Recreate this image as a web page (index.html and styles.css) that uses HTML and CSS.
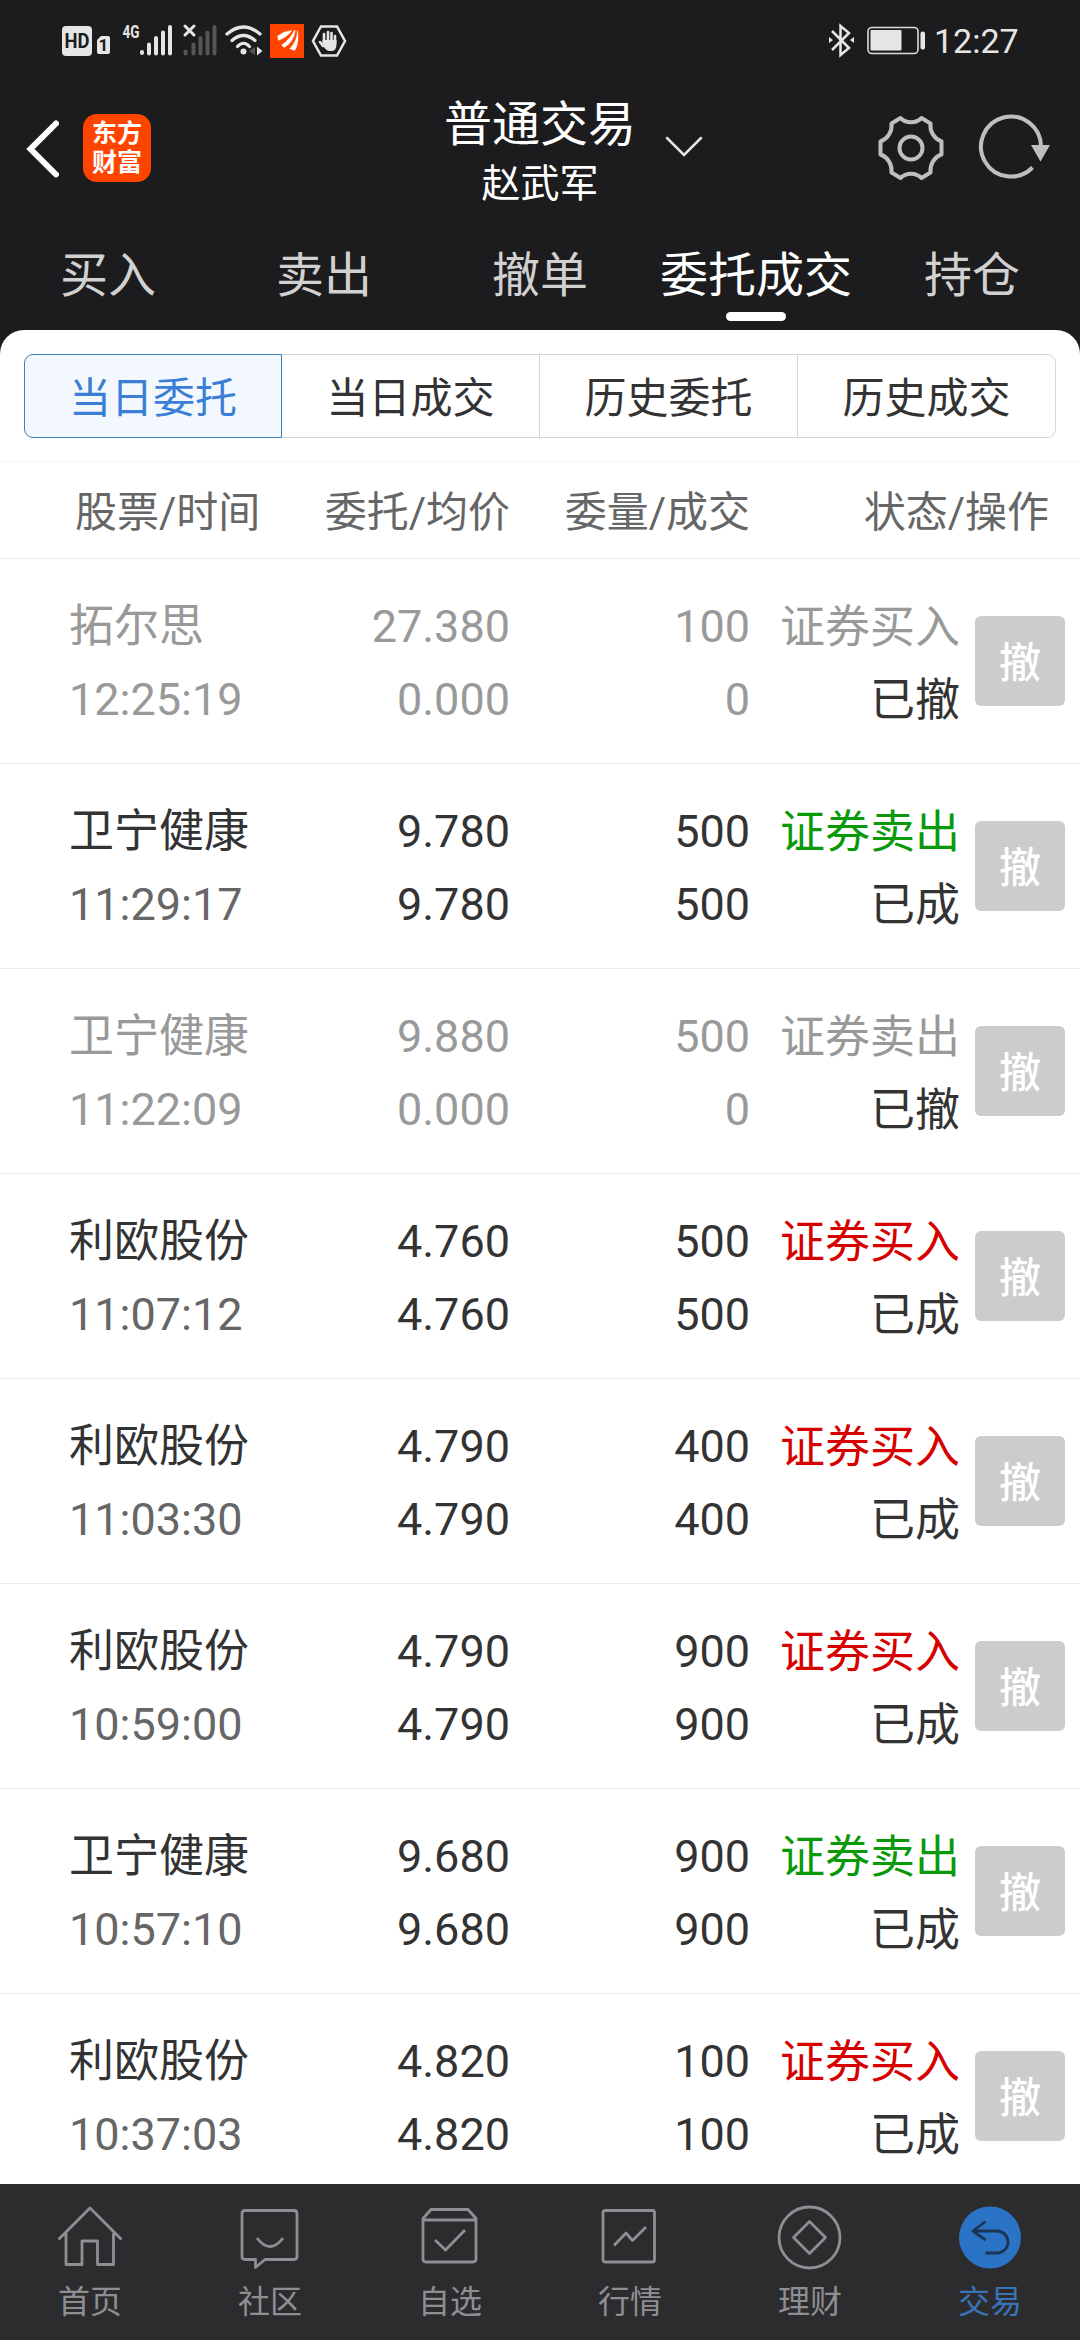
FILE: index.html
```html
<!DOCTYPE html>
<html lang="zh-CN">
<head>
    <meta charset="UTF-8">
    <meta name="viewport" content="width=device-width, initial-scale=1.0">
    <title>普通交易</title>
    <link rel="stylesheet" href="styles.css">
</head>
<body>
    <div class="status-bar">
        <svg class="status-left" width="290" height="40" viewBox="60 20 290 40">
            <rect x="62" y="26" width="30" height="30" rx="4" fill="#e6e6e6"/>
            <text x="77" y="47.500" class="hd" text-anchor="middle" textLength="25" lengthAdjust="spacingAndGlyphs">HD</text>
            <path d="M101 36h7q2 0 2 2v14q0 2-2 2h-9q-2 0-2-2V40z" fill="#e6e6e6"/>
            <text x="103.500" y="51" class="sim" text-anchor="middle">1</text>
            <text x="122.500" y="38" class="net" textLength="17" lengthAdjust="spacingAndGlyphs">4G</text>
            <path d="M142 52v1M149 44.500v9M156 38v15.500M163 32.500v21M170 27v26.500" stroke="#e6e6e6" stroke-width="4" stroke-linecap="round"/>
            <path d="M185.500 51.500v2M193.500 44.500v9M200.500 38v15.500M207.500 32.500v21M214.500 27v26.500" stroke="#555" stroke-width="4" stroke-linecap="round"/>
            <path d="M185 26l9 9M194 26l-9 9" stroke="#e6e6e6" stroke-width="3" stroke-linecap="round"/>
            <g fill="none" stroke="#e6e6e6" stroke-width="3.200" stroke-linecap="round">
                <path d="M227 34q16.500-14 33 0"/>
                <path d="M232 40.500q11.500-10 23 0"/>
                <path d="M237.500 46.500q6-6.500 12 0"/>
            </g>
            <circle cx="243.500" cy="51.500" r="3" fill="#e6e6e6"/>
            <path d="M255 47v8l-6-4z" fill="#555"/>
            <path d="M257 46.500v9l5.500-4.500z" fill="#e6e6e6"/>
            <rect x="270" y="24" width="34" height="34" fill="#ff4400"/>
            <path d="M277 36q7-6 16-6-6 8-15 11zM281 45q9-6 13-15h2q-2 13-12 18zM289 49q8-8 8-19h1q2 13-3 21z" fill="#fff" stroke="#ff4400" stroke-width=".6"/>
            <path d="M321 26.500h16l8 14.500-8 14.500h-16l-8-14.500z" fill="none" stroke="#e6e6e6" stroke-width="2.500"/>
            <path d="M324 43V34M328 43v-11M331.500 43v-10M335 43v-7M323 46l-3-4" stroke="#e6e6e6" stroke-width="2.600" stroke-linecap="round"/>
            <path d="M322.500 40h14v4q0 6-4 7h-4q-3-1-6-6z" fill="#e6e6e6"/>
        </svg>
        <div class="status-right">
            <svg width="100" height="40" viewBox="827 20 100 40">
                <path d="M832 31l17 17-8.500 7V26l8.500 7-17 17" fill="none" stroke="#e6e6e6" stroke-width="2.500"/>
                <path d="M829 37l4 3-4 3zM854 37l-4 3 4 3z" fill="#e6e6e6"/>
                <rect x="868" y="27.500" width="50" height="26" rx="4" fill="none" stroke="#dcdcdc" stroke-width="1.600"/>
                <rect x="870.500" y="30" width="31" height="20.500" rx="1" fill="#e6e6e6"/>
                <rect x="920.500" y="31.500" width="4.500" height="18" rx="2" fill="#e6e6e6"/>
            </svg>
            <span class="clock">12:27</span>
        </div>
    </div>

    <div class="header">
        <div class="header-left">
            <svg width="34" height="60" viewBox="0 0 34 60">
                <path d="M31 5.500L5.500 31 31 56.500" fill="none" stroke="#fff" stroke-width="6" stroke-linecap="round"/>
            </svg>
            <div class="logo"><span>东方</span><span>财富</span></div>
        </div>
        <div class="header-title">
            <div class="title">普通交易</div>
            <div class="account">赵武军</div>
            <svg class="chevron" width="38" height="22" viewBox="0 0 38 22">
                <path d="M2 2l17 17L36 2" fill="none" stroke="#e6e6e6" stroke-width="2.500" stroke-linecap="round"/>
            </svg>
        </div>
        <div class="header-right">
            <svg width="70" height="70" viewBox="876 113 70 70" fill="none" stroke="#bfbfbf" stroke-width="4">
                <path d="M900.500 118A15 15 0 0 0 921.500 118L930.500 123.500A17 17 0 0 0 941.500 141.500V154.500A17 17 0 0 0 930.500 172.500L921.500 178A15 15 0 0 0 900.500 178L891.500 172.500A17 17 0 0 0 880.500 154.500V141.500A17 17 0 0 0 891.500 123.500Z" stroke-linejoin="round"/>
                <circle cx="911" cy="148" r="11.500"/>
            </svg>
            <svg width="74" height="70" viewBox="978 113 74 70">
                <path d="M1032.500 167.500A30 30 0 1 1 1041 147" fill="none" stroke="#bfbfbf" stroke-width="4"/>
                <path d="M1031 145h19l-9.500 16.500z" fill="#bfbfbf"/>
            </svg>
        </div>
    </div>

    <div class="tabs">
        <div class="tab">买入</div>
        <div class="tab">卖出</div>
        <div class="tab">撤单</div>
        <div class="tab active">委托成交</div>
        <div class="tab">持仓</div>
    </div>

    <div class="panel">
        <div class="segments">
            <div class="segment active">当日委托</div>
            <div class="segment">当日成交</div>
            <div class="segment">历史委托</div>
            <div class="segment">历史成交</div>
        </div>
        <div class="list-head">
            <div class="col-name">股票/时间</div>
            <div class="col-price">委托/均价</div>
            <div class="col-qty">委量/成交</div>
            <div class="col-action">状态/操作</div>
        </div>

        <div class="order cancelled">
            <div class="col-name">拓尔思<br><span class="time">12:25:19</span></div>
            <div class="col-price">27.380<br>0.000</div>
            <div class="col-qty">100<br>0</div>
            <div class="col-status"><span class="buy">证券买入</span><br><span class="state">已撤</span></div>
            <div class="btn-cancel">撤</div>
        </div>
        <div class="order">
            <div class="col-name">卫宁健康<br><span class="time">11:29:17</span></div>
            <div class="col-price">9.780<br>9.780</div>
            <div class="col-qty">500<br>500</div>
            <div class="col-status"><span class="sell">证券卖出</span><br><span class="state">已成</span></div>
            <div class="btn-cancel">撤</div>
        </div>
        <div class="order cancelled">
            <div class="col-name">卫宁健康<br><span class="time">11:22:09</span></div>
            <div class="col-price">9.880<br>0.000</div>
            <div class="col-qty">500<br>0</div>
            <div class="col-status"><span class="sell">证券卖出</span><br><span class="state">已撤</span></div>
            <div class="btn-cancel">撤</div>
        </div>
        <div class="order">
            <div class="col-name">利欧股份<br><span class="time">11:07:12</span></div>
            <div class="col-price">4.760<br>4.760</div>
            <div class="col-qty">500<br>500</div>
            <div class="col-status"><span class="buy">证券买入</span><br><span class="state">已成</span></div>
            <div class="btn-cancel">撤</div>
        </div>
        <div class="order">
            <div class="col-name">利欧股份<br><span class="time">11:03:30</span></div>
            <div class="col-price">4.790<br>4.790</div>
            <div class="col-qty">400<br>400</div>
            <div class="col-status"><span class="buy">证券买入</span><br><span class="state">已成</span></div>
            <div class="btn-cancel">撤</div>
        </div>
        <div class="order">
            <div class="col-name">利欧股份<br><span class="time">10:59:00</span></div>
            <div class="col-price">4.790<br>4.790</div>
            <div class="col-qty">900<br>900</div>
            <div class="col-status"><span class="buy">证券买入</span><br><span class="state">已成</span></div>
            <div class="btn-cancel">撤</div>
        </div>
        <div class="order">
            <div class="col-name">卫宁健康<br><span class="time">10:57:10</span></div>
            <div class="col-price">9.680<br>9.680</div>
            <div class="col-qty">900<br>900</div>
            <div class="col-status"><span class="sell">证券卖出</span><br><span class="state">已成</span></div>
            <div class="btn-cancel">撤</div>
        </div>
        <div class="order">
            <div class="col-name">利欧股份<br><span class="time">10:37:03</span></div>
            <div class="col-price">4.820<br>4.820</div>
            <div class="col-qty">100<br>100</div>
            <div class="col-status"><span class="buy">证券买入</span><br><span class="state">已成</span></div>
            <div class="btn-cancel">撤</div>
        </div>
    </div>

    <div class="bottom-nav">
        <div class="nav-item">
            <svg width="70" height="70" viewBox="0 0 70 70">
                <path d="M3.500 35.500L35 4l31.500 31.500M11 29v31.500h16V37h15.500v23.500h16V29"/>
            </svg>
            <span>首页</span>
        </div>
        <div class="nav-item">
            <svg width="70" height="70" viewBox="0 0 70 70">
                <path d="M10 6.500h49q3 0 3 3v43q0 3-3 3H30l-9.500 8v-8H10q-3 0-3-3v-43q0-3 3-3z"/>
                <path d="M22 34q13 17 26 0"/>
            </svg>
            <span>社区</span>
        </div>
        <div class="nav-item">
            <svg width="70" height="70" viewBox="0 0 70 70">
                <path d="M8 14.500l8-9h37l8 9V55q0 3-3 3H11q-3 0-3-3zM8 16h53"/>
                <path d="M20 36l10.500 10L50 26"/>
            </svg>
            <span>自选</span>
        </div>
        <div class="nav-item">
            <svg width="70" height="70" viewBox="0 0 70 70">
                <rect x="8" y="6.500" width="51.500" height="51.500" rx="2"/>
                <path d="M19 41.500L31 29l6.500 7.500L51 23"/>
            </svg>
            <span>行情</span>
        </div>
        <div class="nav-item">
            <svg width="70" height="70" viewBox="0 0 70 70">
                <circle cx="34.500" cy="33.500" r="30.500"/>
                <path d="M34.500 17.500l16 16-16 16-16-16z"/>
            </svg>
            <span>理财</span>
        </div>
        <div class="nav-item active">
            <svg width="70" height="70" viewBox="0 0 70 70">
                <circle class="disc" cx="35" cy="33.500" r="31"/>
                <path d="M30.500 17.500L18 27l12.500 9M18 27h24a11 11 0 0 1 0 22H30.500"/>
            </svg>
            <span>交易</span>
        </div>
    </div>
</body>
</html>
```
FILE: styles.css
```css
* {
    box-sizing: border-box;
}
body {
    margin: 0;
    width: 1080px;
    height: 2340px;
    overflow: hidden;
    display: flex;
    flex-direction: column;
    background: #1c1c1e;
    color: #333;
    font-family: Roboto, "Noto Sans CJK SC", sans-serif;
}
svg {
    display: block;
}

/* status bar */
.status-bar {
    height: 80px;
    padding: 20px 60px 20px;
    display: flex;
    justify-content: space-between;
}
.status-right {
    display: flex;
    width: 193px;
    gap: 7px;
}
.clock {
    font-size: 34px;
    line-height: 42px;
    color: #e6e6e6;
}
.hd {
    font-size: 20px;
    font-weight: 700;
    fill: #1c1c1e;
}
.sim {
    font-size: 17px;
    font-weight: 700;
    fill: #1c1c1e;
}
.net {
    font-size: 19px;
    font-weight: 700;
    fill: #e6e6e6;
}

/* header */
.header {
    height: 150px;
    flex-shrink: 0;
    display: grid;
    grid-template-columns: 1fr 200px 1fr;
    color: #fff;
}
.header-left {
    display: flex;
    align-items: center;
    gap: 24px;
    height: 136px;
    padding-left: 25px;
}
.logo {
    width: 68px;
    height: 68px;
    padding-top: 5px;
    border-radius: 14px;
    background: #ff4400;
    display: flex;
    flex-direction: column;
    align-items: center;
    font-size: 25px;
    line-height: 29px;
    font-weight: 700;
}
.header-title {
    position: relative;
    text-align: center;
    padding-top: 13px;
}
.title {
    font-size: 48px;
    line-height: 64px;
}
.account {
    font-size: 39px;
    line-height: 54px;
}
.chevron {
    position: absolute;
    left: 225px;
    top: 56px;
}
.header-right {
    display: flex;
    align-items: center;
    justify-content: flex-end;
    gap: 32px;
    height: 136px;
    padding-right: 28px;
}

/* main tabs */
.tabs {
    height: 100px;
    flex-shrink: 0;
    display: flex;
}
.tab {
    width: 216px;
    text-align: center;
    font-size: 48px;
    line-height: 82px;
    padding-top: 5px;
    color: #d1d1d1;
    height: 91px;
}
.tab.active {
    color: #fff;
    display: flex;
    flex-direction: column;
    align-items: center;
}
.tab.active::after {
    content: "";
    width: 60px;
    height: 9px;
    flex-shrink: 0;
    margin-top: -5px;
    border-radius: 5px;
    background: #fff;
}

/* order list */
.panel {
    flex: 1;
    min-height: 0;
    overflow: hidden;
    background: #fff;
    border-radius: 24px 24px 0 0;
}
.segments {
    display: flex;
    margin: 24px 24px 23px;
}
.segment {
    width: 258px;
    height: 84px;
    text-align: center;
    font-size: 42px;
    line-height: 87px;
    border: 1px solid #d3d7d7;
}
.segment + .segment {
    border-left: none;
}
.segment:last-child {
    border-radius: 0 9px 9px 0;
}
.segment.active {
    color: #3a7fd5;
    background: #f3f8fe;
    border-color: #4080b0;
    border-radius: 9px 0 0 9px;
}
.list-head {
    display: flex;
    height: 98px;
    padding-left: 75px;
    font-size: 42px;
    line-height: 102px;
    color: #666;
    border-top: 1px solid #f5f5f5;
    border-bottom: 1px solid #ececec;
}
.order {
    display: flex;
    height: 205px;
    padding: 31px 0 0 69px;
    font-size: 45px;
    line-height: 73px;
    border-bottom: 1px solid #ececec;
}
.col-name {
    width: 221px;
}
.col-price {
    width: 220px;
    text-align: right;
}
.col-qty {
    width: 240px;
    text-align: right;
}
.list-head .col-name {
    width: 215px;
}
.col-action {
    width: 299px;
    text-align: right;
}
.col-status {
    width: 210px;
    padding-top: 1px;
    text-align: right;
}
.time {
    color: #666;
}
.buy {
    color: #d60000;
}
.sell {
    color: #099909;
}
.cancelled,
.cancelled .time,
.cancelled .buy,
.cancelled .sell {
    color: #999;
}
.state {
    color: #333;
}
.btn-cancel {
    width: 90px;
    height: 90px;
    margin: 26px 0 0 15px;
    border-radius: 6px;
    background: #ccc;
    color: #fff;
    text-align: center;
    font-size: 42px;
    font-weight: 500;
    line-height: 96px;
}

/* bottom navigation */
.bottom-nav {
    height: 156px;
    flex-shrink: 0;
    display: flex;
    background: #2c2c2e;
}
.nav-item {
    width: 180px;
    padding-top: 20px;
    display: flex;
    flex-direction: column;
    align-items: center;
    font-size: 32px;
    line-height: 56px;
    color: #8e8e93;
}
.nav-item svg {
    fill: none;
    stroke: #8e8e93;
    stroke-width: 2.8;
    stroke-linejoin: round;
}
.nav-item.active {
    color: #3a74b8;
}
.nav-item.active svg {
    stroke: #1c3552;
}
.nav-item .disc {
    fill: #2b73c5;
    stroke: none;
}
```
